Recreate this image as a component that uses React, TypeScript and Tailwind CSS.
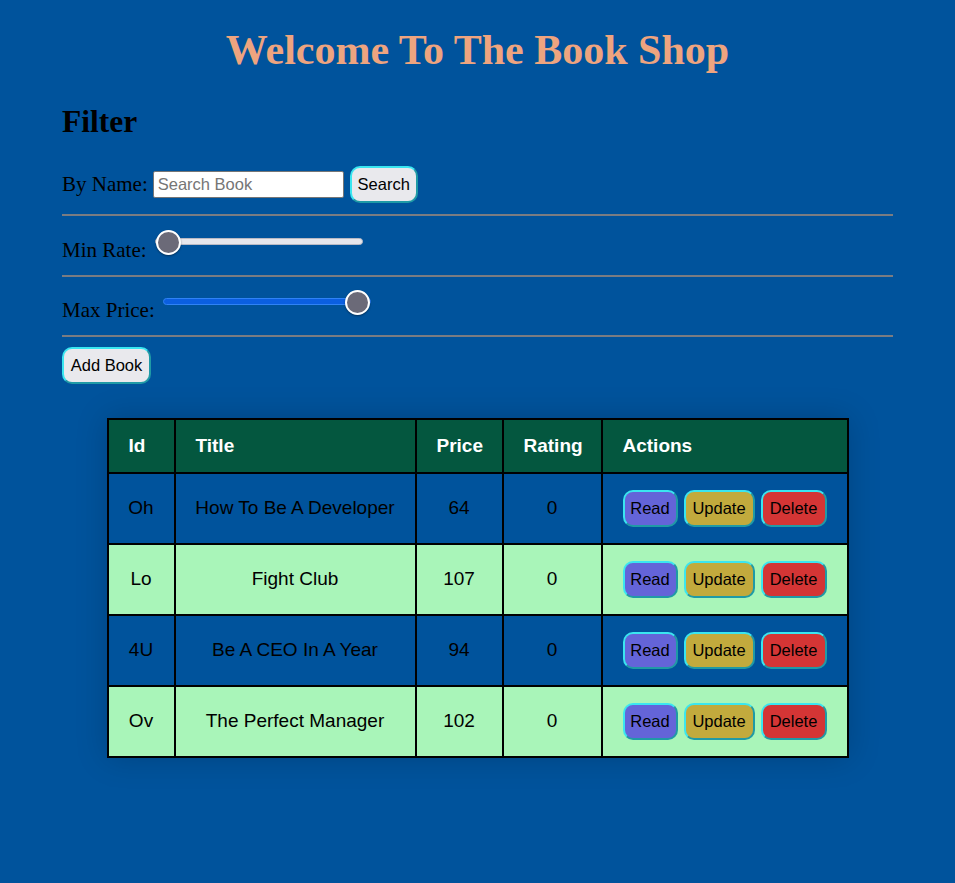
import React from "react";

interface Book {
    id: string;
    title: string;
    price: number;
    rating: number;
}

const books: Book[] = [
    { id: "Oh", title: "How To Be A Developer", price: 64, rating: 0 },
    { id: "Lo", title: "Fight Club", price: 107, rating: 0 },
    { id: "4U", title: "Be A CEO In A Year", price: 94, rating: 0 },
    { id: "Ov", title: "The Perfect Manager", price: 102, rating: 0 },
];

const btnBase =
    "h-[37px] rounded-[10px] border-2 border-t-[#3ae6f0] border-l-[#3ae6f0] border-b-[#1f9aa6] border-r-[#1f9aa6] text-[16.5px] text-black font-['Liberation_Sans',Arial,sans-serif] text-center";

const rangeBase =
    "appearance-none bg-transparent w-[208px] h-[25px] cursor-pointer [&::-webkit-slider-runnable-track]:h-[7px] [&::-webkit-slider-runnable-track]:rounded-full [&::-webkit-slider-thumb]:appearance-none [&::-webkit-slider-thumb]:w-[25px] [&::-webkit-slider-thumb]:h-[25px] [&::-webkit-slider-thumb]:rounded-full [&::-webkit-slider-thumb]:bg-[#6b6a78] [&::-webkit-slider-thumb]:border-2 [&::-webkit-slider-thumb]:border-white [&::-webkit-slider-thumb]:mt-[-9px] [&::-webkit-slider-thumb]:shadow-[0_1px_2px_rgba(0,0,0,0.4)]";

function Divider() {
    return <div className="border-t-2 border-[#7a7c82]" />;
}

export default function App() {
    return (
        <div className="min-h-screen bg-[#00539c] font-['Liberation_Serif','Times_New_Roman',serif] text-black text-[21px] pb-10">
            <h1 className="pt-[27px] text-center text-[42px] leading-[46px] font-bold text-[#eea47f]">
                Welcome To The Book Shop
            </h1>

            <div className="mx-[62px]">
                <h2 className="mt-[32px] text-[31.5px] leading-[34px] font-bold">Filter</h2>

                <div className="mt-[27px] flex items-center h-[37px]">
                    <span>By Name:</span>
                    <input
                        type="text"
                        placeholder="Search Book"
                        className="ml-[5px] w-[191px] h-[27px] bg-white border border-[#767676] rounded-[2px] px-[4px] text-[16.5px] font-['Liberation_Sans',Arial,sans-serif] placeholder:text-[#757575] outline-none"
                    />
                    <button className={`${btnBase} ml-[6px] w-[68px] bg-[#e9e9ed]`}>Search</button>
                </div>

                <div className="mt-[11px]">
                    <Divider />
                </div>

                <div className="mt-[13px] flex items-start h-[33px]">
                    <span className="mt-[10px] leading-[23px]">Min Rate:</span>
                    <input
                        type="range"
                        min={0}
                        max={5}
                        defaultValue={0}
                        className={`${rangeBase} ml-[8px] [&::-webkit-slider-runnable-track]:bg-[#e6e6ec] [&::-webkit-slider-runnable-track]:border [&::-webkit-slider-runnable-track]:border-[#b9b9c4]`}
                    />
                </div>

                <div className="mt-[13px]">
                    <Divider />
                </div>

                <div className="mt-[12px] flex items-start h-[33px]">
                    <span className="mt-[10px] leading-[23px]">Max Price:</span>
                    <input
                        type="range"
                        min={0}
                        max={200}
                        defaultValue={200}
                        className={`${rangeBase} ml-[8px] [&::-webkit-slider-runnable-track]:bg-[#0b5fe0] [&::-webkit-slider-runnable-track]:border [&::-webkit-slider-runnable-track]:border-[#2f82f5]`}
                    />
                </div>

                <div className="mt-[13px]">
                    <Divider />
                </div>

                <button className={`${btnBase} mt-[10px] w-[89px] bg-[#e9e9ed]`}>Add Book</button>
            </div>

            <table className="mt-[34px] mx-auto w-[740px] table-fixed border-collapse border-2 border-black shadow-[0_0_30px_rgba(0,0,0,0.18)] font-['Liberation_Sans',Arial,sans-serif] text-[19px]">
                <thead>
                    <tr className="bg-[#04573f] text-white">
                        <th className="w-[67px] border-2 border-black px-5 py-4 text-left font-bold leading-[20px]">Id</th>
                        <th className="w-[241px] border-2 border-black px-5 py-4 text-left font-bold leading-[20px]">Title</th>
                        <th className="w-[87px] border-2 border-black px-5 py-4 text-left font-bold leading-[20px]">Price</th>
                        <th className="w-[99px] border-2 border-black px-5 py-4 text-left font-bold leading-[20px]">Rating</th>
                        <th className="w-[246px] border-2 border-black px-5 py-4 text-left font-bold leading-[20px]">Actions</th>
                    </tr>
                </thead>
                <tbody>
                    {books.map((book, i) => (
                        <tr key={book.id} className={i % 2 === 0 ? "bg-[#00539c]" : "bg-[#a9f5b9]"}>
                            <td className="border-2 border-black py-4 text-center">{book.id}</td>
                            <td className="border-2 border-black py-4 text-center">{book.title}</td>
                            <td className="border-2 border-black py-4 text-center">{book.price}</td>
                            <td className="border-2 border-black py-4 text-center">{book.rating}</td>
                            <td className="border-2 border-black px-5 py-4">
                                <div className="flex gap-[6px]">
                                    <button className={`${btnBase} w-[55px] bg-[#6464d8]`}>Read</button>
                                    <button className={`${btnBase} w-[71px] bg-[#c2aa3d]`}>Update</button>
                                    <button className={`${btnBase} w-[66px] bg-[#d43535]`}>Delete</button>
                                </div>
                            </td>
                        </tr>
                    ))}
                </tbody>
            </table>
        </div>
    );
}
